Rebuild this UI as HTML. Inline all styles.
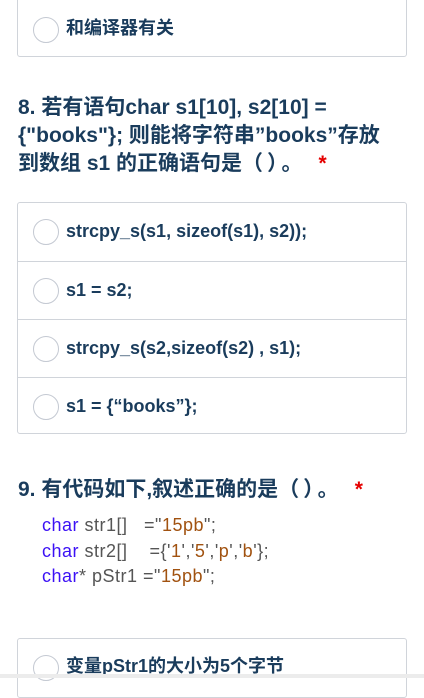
<!DOCTYPE html>
<html><head><meta charset="utf-8"><style>
*{margin:0;padding:0;box-sizing:border-box}
body{width:424px;height:678px;overflow:hidden;background:#fff;font-family:"Liberation Sans","Noto Sans CJK SC",sans-serif;color:#1a3c5c;position:relative}
.box{position:absolute;left:17px;width:390px;border:1.5px solid #d0d4da;border-radius:3px;background:#fff}
.row{position:relative;height:58px;border-top:1.5px solid #d0d4da}
.row:first-child{border-top:none}
.c{position:absolute;left:15px;top:16px;width:26px;height:26px;border:1.5px solid #c4c9d2;border-radius:50%}
.t{position:absolute;left:48px;top:17px;font-size:18px;font-weight:bold;white-space:nowrap;line-height:22px}
.q{position:absolute;left:18px;font-size:21px;font-weight:bold;line-height:28px;white-space:nowrap}
.p{letter-spacing:4px}
.star{color:#e50000;margin-left:12px}
.code{position:absolute;left:42px;top:513px;font-size:18px;line-height:25.5px;color:#555;white-space:pre;letter-spacing:0.5px}
.k{color:#3b10f5}.s{color:#a15210}
</style></head><body>
<div class="box" style="top:-10px;height:67px"><div class="row" style="height:67px"><div class="c" style="top:26px"></div><div class="t" style="top:26px">和编译器有关</div></div></div>
<div class="q" style="top:94px">8. 若有语句char s1[10], s2[10] =<br>{"books"}; 则能将字符串”books”存放<br>到数组 s1 的正确语句是<span class="p">（）。</span><span class="star">*</span></div>
<div class="box" style="top:202px">
<div class="row"><div class="c"></div><div class="t">strcpy_s(s1, sizeof(s1), s2));</div></div>
<div class="row"><div class="c"></div><div class="t">s1 = s2;</div></div>
<div class="row"><div class="c"></div><div class="t">strcpy_s(s2,sizeof(s2) , s1);</div></div>
<div class="row" style="height:56px"><div class="c"></div><div class="t">s1 = {“books”};</div></div>
</div>
<div class="q" style="top:476px">9. 有代码如下,叙述正确的是<span class="p">（）。</span><span class="star">*</span></div>
<div class="code"><span class="k">char</span> str1[]   ="<span class="s">15pb</span>";
<span class="k">char</span> str2[]    ={'<span class="s">1</span>','<span class="s">5</span>','<span class="s">p</span>','<span class="s">b</span>'};
<span class="k">char</span>* pStr1 ="<span class="s">15pb</span>";</div>
<div class="box" style="top:638px;height:60px"><div class="row"><div class="c" style="top:16px"></div><div class="t" style="top:16px">变量pStr1的大小为5个字节</div></div></div>
<div style="position:absolute;left:0;top:674px;width:424px;height:4px;background:#ececec"></div>
</body></html>
